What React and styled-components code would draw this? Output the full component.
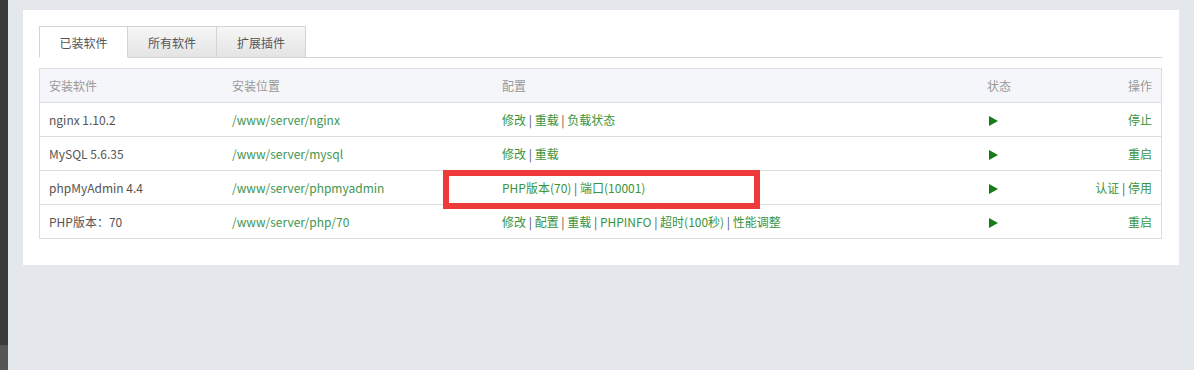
import styled, { createGlobalStyle } from "styled-components";

const GlobalStyle = createGlobalStyle`
    body{
        margin:0;
        background:#e4e7eb;
        font-family:"Noto Sans CJK SC", "Liberation Sans", sans-serif;
        font-size:12px;
    }
`

const softwares = [
    { name: "nginx 1.10.2", path: "/www/server/nginx", config: ["修改", "重载", "负载状态"], ops: ["停止"] },
    { name: "MySQL 5.6.35", path: "/www/server/mysql", config: ["修改", "重载"], ops: ["重启"] },
    { name: "phpMyAdmin 4.4", path: "/www/server/phpmyadmin", config: ["PHP版本(70)", "端口(10001)"], ops: ["认证", "停用"], marked: true },
    { name: "PHP版本：70", path: "/www/server/php/70", config: ["修改", "配置", "重载", "PHPINFO", "超时(100秒)", "性能调整"], ops: ["重启"] },
];

const tabs = ["已装软件", "所有软件", "扩展插件"];

function Links({ items }){
    return items.map((item, i) => <span key={item}>
        {i > 0 && <Sep> | </Sep>}
        <GreenLink>{item}</GreenLink>
    </span>)
}

export default function App(){
    return <>
    <GlobalStyle/>
    <Page>
        <Strip/>
        <Main>
            <Panel>
                <Tabs>
                    {tabs.map((t, i) => <Tab key={t} active={i === 0}>{t}</Tab>)}
                </Tabs>
                <TableWrap>
                    <Table>
                        <HeadRow>
                            <Cell>安装软件</Cell>
                            <Cell>安装位置</Cell>
                            <Cell>配置</Cell>
                            <Cell>状态</Cell>
                            <Cell right>操作</Cell>
                        </HeadRow>
                        {softwares.map((s) => <Row key={s.name}>
                            <Cell>{s.name}</Cell>
                            <Cell><Path>{s.path}</Path></Cell>
                            <Cell><Links items={s.config}/></Cell>
                            <Cell><Play/></Cell>
                            <Cell right><Links items={s.ops}/></Cell>
                        </Row>)}
                    </Table>
                    <Mark/>
                </TableWrap>
            </Panel>
        </Main>
    </Page>
    </>
}

const Page = styled.div`
    display:flex;
    width:1194px;
    height:370px;
    overflow:hidden;
`

const Strip = styled.div`
    width:8px;
    flex-shrink:0;
    background:linear-gradient(to bottom, #3b3b3b 0, #3b3b3b 345px, #565656 345px);
`

const Main = styled.div`
    flex:1;
    padding:10px 15px;
`

const Panel = styled.div`
    background:#fff;
    height:223px;
    padding:16px 17px 16px 16px;
`

const Tabs = styled.div`
    display:flex;
    height:31px;
    border-bottom:1px solid #d4d4d4;
`

const Tab = styled.div`
    width:89px;
    box-sizing:border-box;
    height:32px;
    display:flex;
    align-items:center;
    justify-content:center;
    color:#555;
    border:1px solid #d4d4d4;
    border-left:${props => props.active ? "1px solid #d4d4d4" : "none"};
    border-bottom:${props => props.active ? "1px solid #fff" : "1px solid #d4d4d4"};
    background:${props => props.active ? "#fff" : "linear-gradient(#f6f6f6, #e4e4e4)"};
`

const TableWrap = styled.div`
    position:relative;
    margin-top:10px;
`

const Table = styled.div`
    border:1px solid #dddddd;
    border-bottom:none;
`

const Row = styled.div`
    display:grid;
    grid-template-columns:183px 270px 485px 100px 1fr;
    height:33px;
    border-bottom:1px solid #dddddd;
    color:#555;
`

const HeadRow = styled(Row)`
    background:#f5f6fa;
    color:#999;
`

const Cell = styled.div`
    display:flex;
    align-items:center;
    justify-content:${props => props.right ? "flex-end" : "flex-start"};
    padding:0 9px;
    white-space:nowrap;
`

const Path = styled.span`
    color:#3f9651;
`

const GreenLink = styled.span`
    color:#3a943c;
`

const Sep = styled.span`
    color:#555;
    white-space:pre;
`

const Play = styled.span`
    width:0;
    height:0;
    margin:2px 0 0 2px;
    border-top:5px solid transparent;
    border-bottom:5px solid transparent;
    border-left:9px solid #167d16;
`

const Mark = styled.div`
    position:absolute;
    left:404px;
    top:102px;
    width:305px;
    height:27px;
    border:6px solid #ef3a3a;
`
